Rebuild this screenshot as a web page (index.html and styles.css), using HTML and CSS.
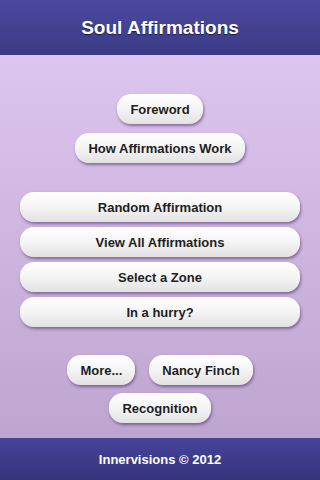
FILE: index.html
```html
<!DOCTYPE html>
<html>
<head>
<meta charset="utf-8">
<link rel="stylesheet" href="styles.css">
</head>
<body>
<div class="app">
  <header class="topbar"><h1 class="title">Soul Affirmations</h1></header>
  <main class="content">
    <div class="group group-top">
      <button class="btn">Foreword</button>
      <button class="btn">How Affirmations Work</button>
    </div>
    <div class="group group-wide">
      <button class="btn wide">Random Affirmation</button>
      <button class="btn wide">View All Affirmations</button>
      <button class="btn wide">Select a Zone</button>
      <button class="btn wide">In a hurry?</button>
    </div>
    <div class="group group-bottom">
      <div class="row">
        <button class="btn">More...</button>
        <button class="btn">Nancy Finch</button>
      </div>
      <button class="btn">Recognition</button>
    </div>
  </main>
  <footer class="bottombar">Innervisions © 2012</footer>
</div>
</body>
</html>
```
FILE: styles.css
```css
html, body {
  margin: 0;
  padding: 0;
}
body {
  font-family: "Liberation Sans", Arial, sans-serif;
  width: 320px;
  height: 480px;
  overflow: hidden;
}
.app {
  display: flex;
  flex-direction: column;
  height: 480px;
}
.topbar {
  height: 55px;
  flex: 0 0 55px;
  background: linear-gradient(#4a499e, #3c3b86);
  display: flex;
  align-items: center;
  justify-content: center;
}
.title {
  margin: 0;
  padding-top: 1px;
  color: #fff;
  font-size: 19px;
  font-weight: bold;
  text-shadow: 0 1px 1px rgba(0, 0, 0, 0.6);
}
.content {
  flex: 1;
  background: linear-gradient(#dcc5ee, #bea5cf);
  display: flex;
  flex-direction: column;
  padding-top: 39px;
  box-sizing: border-box;
}
.group {
  display: flex;
  flex-direction: column;
  align-items: center;
}
.group-top {
  gap: 9px;
}
.group-wide {
  margin-top: 29px;
  gap: 5px;
  padding: 0 20px;
  align-items: stretch;
}
.group-bottom {
  margin-top: 28px;
  gap: 8px;
}
.row {
  display: flex;
  gap: 14px;
}
.btn {
  height: 30px;
  padding: 0 13px;
  border: none;
  border-radius: 14px;
  background: linear-gradient(#ffffff, #f4f4f4 50%, #e2e2e2);
  box-shadow: 1px 2px 3px rgba(70, 40, 100, 0.55);
  font-family: "Liberation Sans", Arial, sans-serif;
  font-size: 13px;
  font-weight: bold;
  color: #1e1e1e;
  white-space: nowrap;
}
.btn.wide {
  width: 100%;
}
.bottombar {
  height: 42px;
  flex: 0 0 42px;
  background: linear-gradient(#45449a, #34337c);
  color: #fff;
  font-size: 13px;
  font-weight: bold;
  display: flex;
  align-items: center;
  justify-content: center;
}
```
